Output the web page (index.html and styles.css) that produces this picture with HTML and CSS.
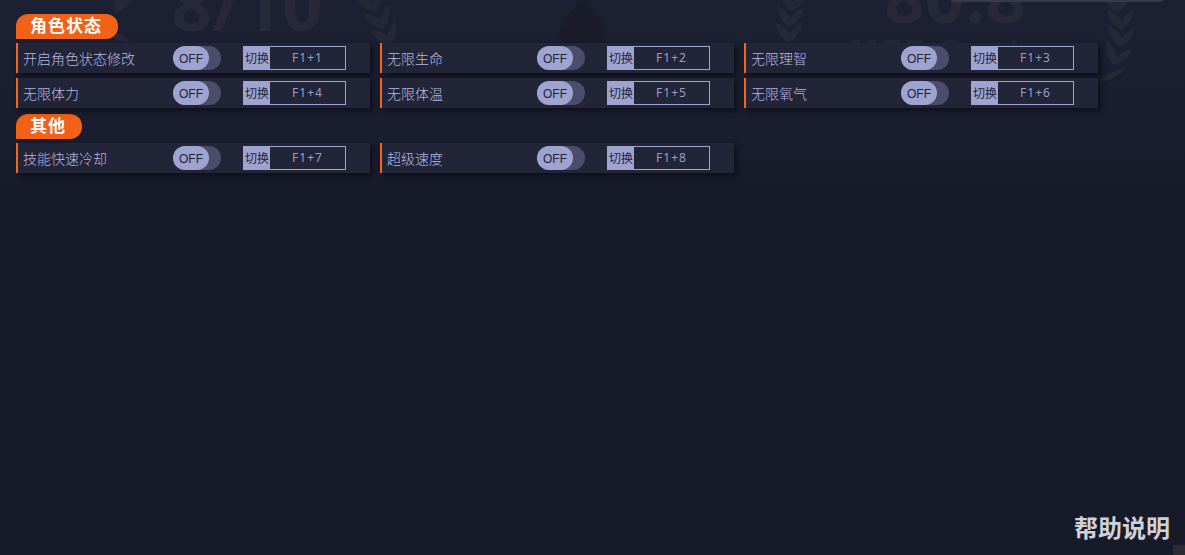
FILE: index.html
```html
<!DOCTYPE html>
<html lang="zh-CN">
<head>
  <meta charset="UTF-8">
  <meta name="viewport" content="width=device-width, initial-scale=1.0">
  <title>角色状态修改</title>
  <link rel="stylesheet" href="styles.css">
</head>
<body>

  <!-- 背景装饰 -->
  <svg class="backdrop" width="1185" height="130" viewBox="0 0 1185 130" aria-hidden="true">
    <defs>
      <g id="leaf">
        <path d="M0 2 Q-12 -5 -14 -19 Q-4 -15 1 -7 Q5 -15 13 -19 Q12 -5 0 2 Z"/>
      </g>
    </defs>
    <g class="art">
      <path d="M112 -4 L136 -6 Q130 7 115 14 Z"/>
      <path d="M106 30 Q122 31 130 42 Q114 43 106 30 Z"/>
      <use href="#leaf" transform="translate(374 10) rotate(-18)"/>
      <use href="#leaf" transform="translate(382 27) rotate(-18)"/>
      <use href="#leaf" transform="translate(389 43) rotate(-18)"/>
      <use href="#leaf" transform="translate(791 9) rotate(10)"/>
      <use href="#leaf" transform="translate(789 25) rotate(6)"/>
      <use href="#leaf" transform="translate(789 41)"/>
      <use href="#leaf" transform="translate(1118 11) rotate(-4)"/>
      <use href="#leaf" transform="translate(1121 28)"/>
      <use href="#leaf" transform="translate(1120 45) rotate(6)"/>
      <use href="#leaf" transform="translate(1114 63) rotate(18)"/>
      <path d="M1098 82 Q1108 71 1126 68 Q1115 81 1098 82 Z"/>
      <path d="M852 40h8v4h-8z M868 40h8v4h-8z M884 40h16v4h-16z M906 40h16v4h-16z M942 43q9 -6 18 0z M1012 40h5v4h-5z"/>
    </g>
    <text class="score" x="247" y="31">8/10</text>
    <text class="score" x="955" y="23">80.8</text>
    <path fill="#1a1c2a" d="M559 43 Q560 18 574 9 L579 0 H585 L590 9 Q604 18 606 43 Z"/>
    <rect x="948" y="-10" width="218" height="12" rx="8" fill="#373a4c"/>
  </svg>

  <main>
    <section>
      <h2>角色状态</h2>
      <div class="list">
        <div class="item">
          <label class="name" for="s1">开启角色状态修改</label>
          <label class="switch"><input type="checkbox" id="s1"><span>OFF</span></label>
          <div class="hotkey"><button type="button">切换</button><input id="k1" aria-label="快捷键" value="F1+1" readonly></div>
        </div>
        <div class="item">
          <label class="name" for="s2">无限生命</label>
          <label class="switch"><input type="checkbox" id="s2"><span>OFF</span></label>
          <div class="hotkey"><button type="button">切换</button><input id="k2" aria-label="快捷键" value="F1+2" readonly></div>
        </div>
        <div class="item">
          <label class="name" for="s3">无限理智</label>
          <label class="switch"><input type="checkbox" id="s3"><span>OFF</span></label>
          <div class="hotkey"><button type="button">切换</button><input id="k3" aria-label="快捷键" value="F1+3" readonly></div>
        </div>
        <div class="item">
          <label class="name" for="s4">无限体力</label>
          <label class="switch"><input type="checkbox" id="s4"><span>OFF</span></label>
          <div class="hotkey"><button type="button">切换</button><input id="k4" aria-label="快捷键" value="F1+4" readonly></div>
        </div>
        <div class="item">
          <label class="name" for="s5">无限体温</label>
          <label class="switch"><input type="checkbox" id="s5"><span>OFF</span></label>
          <div class="hotkey"><button type="button">切换</button><input id="k5" aria-label="快捷键" value="F1+5" readonly></div>
        </div>
        <div class="item">
          <label class="name" for="s6">无限氧气</label>
          <label class="switch"><input type="checkbox" id="s6"><span>OFF</span></label>
          <div class="hotkey"><button type="button">切换</button><input id="k6" aria-label="快捷键" value="F1+6" readonly></div>
        </div>
      </div>
    </section>

    <section>
      <h2>其他</h2>
      <div class="list">
        <div class="item">
          <label class="name" for="s7">技能快速冷却</label>
          <label class="switch"><input type="checkbox" id="s7"><span>OFF</span></label>
          <div class="hotkey"><button type="button">切换</button><input id="k7" aria-label="快捷键" value="F1+7" readonly></div>
        </div>
        <div class="item">
          <label class="name" for="s8">超级速度</label>
          <label class="switch"><input type="checkbox" id="s8"><span>OFF</span></label>
          <div class="hotkey"><button type="button">切换</button><input id="k8" aria-label="快捷键" value="F1+8" readonly></div>
        </div>
      </div>
    </section>
  </main>

  <footer>
    <a href="#help">帮助说明</a>
  </footer>
  <div class="grip"></div>

</body>
</html>
```
FILE: styles.css
```css
* {
  box-sizing: border-box;
}
body {
  margin: 0;
  min-height: 100vh;
  display: flex;
  flex-direction: column;
  background: linear-gradient(#1c2033, #1a1d2d 150px, #171a28 200px, #171a28);
  font-family: "Noto Sans", "Noto Sans CJK SC", sans-serif;
  font-size: 14px;
  color: #9c9fc4;
}
.backdrop {
  position: absolute;
  top: 0;
  left: 0;
  z-index: -1;
}
.art {
  fill: #252837;
}
.score {
  font-family: "Open Sans", sans-serif;
  font-size: 71px;
  font-weight: 700;
  text-anchor: middle;
  fill: #272938;
}
main {
  flex: 1;
  padding: 14px 16px 0;
}
section {
  margin-bottom: 6px;
}
h2 {
  width: fit-content;
  height: 25px;
  margin: 0 0 4px;
  padding: 0 16px 0 14px;
  border-radius: 12px 12px 12px 0;
  background: #f26216;
  color: #fff;
  font-size: 17px;
  line-height: 24px;
  letter-spacing: 1px;
}
.list {
  display: flex;
  flex-wrap: wrap;
  gap: 5px 10px;
}
.item {
  display: flex;
  align-items: center;
  width: 354px;
  height: 30px;
  padding-left: 5px;
  border-left: 2px solid #f26522;
  background: #222438;
  box-shadow: 3px 3px 5px #0e101a;
}
.name {
  width: 150px;
  color: #b6b9e2;
  font-weight: 300;
}
.switch {
  width: 48px;
  height: 24px;
  margin-right: 22px;
  border-radius: 12px;
  background: #4a4d6c;
}
.switch input {
  position: absolute;
  opacity: 0;
}
.switch span {
  display: block;
  width: 36px;
  height: 24px;
  border-radius: 12px;
  background: #9fa3cf;
  color: #222438;
  font-family: "Liberation Sans", sans-serif;
  font-size: 12px;
  line-height: 26px;
  text-align: center;
}
.hotkey {
  display: flex;
  width: 103px;
  height: 24px;
  border: 1px solid #9fa3cf;
}
.hotkey button {
  width: 26px;
  padding: 0;
  border: 0;
  background: #9fa3cf;
  color: #222438;
  font: 12px/22px "Noto Sans CJK SC", sans-serif;
}
.hotkey input {
  flex: 1;
  min-width: 0;
  padding: 0 0 2px;
  border: 0;
  outline: 0;
  background: none;
  color: #9c9fc4;
  font: 12px "Noto Sans", sans-serif;
  letter-spacing: 1px;
  text-align: center;
}
footer {
  padding: 0 15px 10px;
  text-align: right;
}
footer a {
  color: #cfd1d8;
  font-size: 24px;
  font-weight: 700;
  line-height: 34px;
  text-decoration: none;
}
.grip {
  position: fixed;
  right: 0;
  bottom: 0;
  width: 12px;
  height: 10px;
  background: #2c2c30;
}
```
